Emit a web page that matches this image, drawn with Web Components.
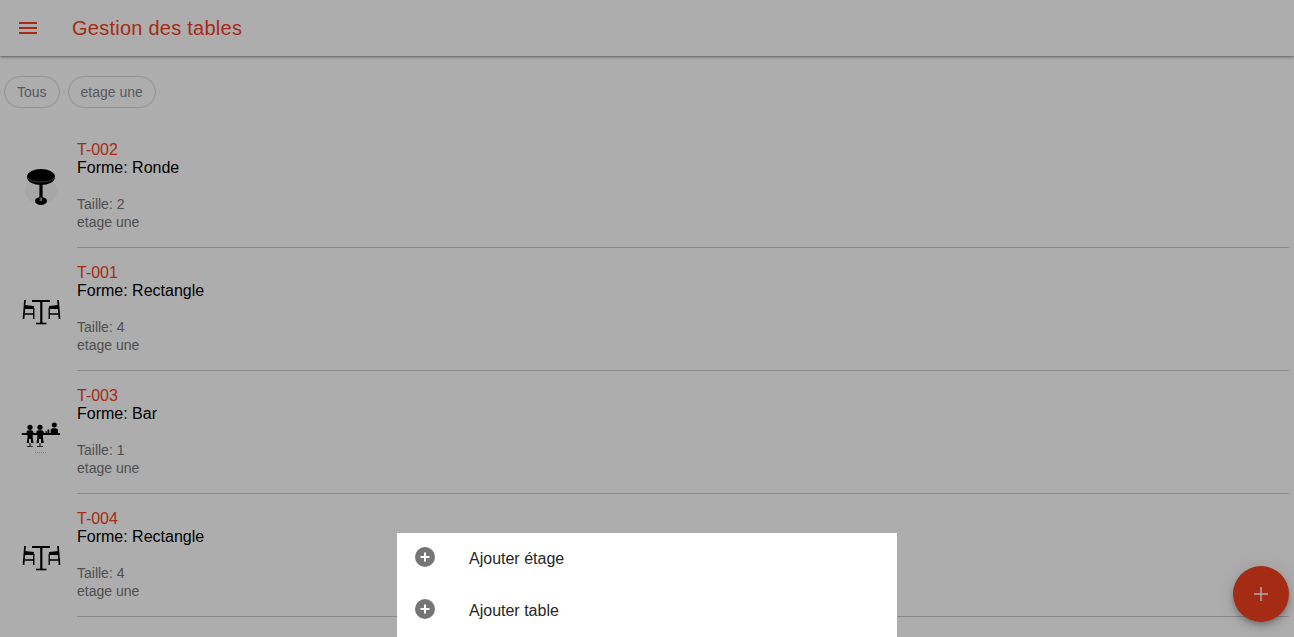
<!DOCTYPE html>
<html lang="fr">
<head>
<meta charset="utf-8">
<title>Gestion des tables</title>
<style>
  html, body { margin: 0; height: 100%; overflow: hidden; background: #fff; }
  body { font-family: "Liberation Sans", Arial, sans-serif; }
</style>
</head>
<body>
<tables-page>
  <app-toolbar>Gestion des tables</app-toolbar>
  <filter-bar>
    <filter-chip>Tous</filter-chip>
    <filter-chip>etage une</filter-chip>
  </filter-bar>
  <table-list>
    <table-row code="T-002" shape="Ronde" size="2" floor="etage une"></table-row>
    <table-row code="T-001" shape="Rectangle" size="4" floor="etage une"></table-row>
    <table-row code="T-003" shape="Bar" size="1" floor="etage une"></table-row>
    <table-row code="T-004" shape="Rectangle" size="4" floor="etage une"></table-row>
  </table-list>
</tables-page>
<add-fab></add-fab>
<page-backdrop></page-backdrop>
<action-sheet>
  <sheet-button>Ajouter étage</sheet-button>
  <sheet-button>Ajouter table</sheet-button>
</action-sheet>

<script>
const RED = '#f5401f';

class TablesPage extends HTMLElement {
  connectedCallback() {
    this.attachShadow({ mode: 'open' }).innerHTML = `
      <style>
        :host { display: block; height: 100vh; overflow: hidden; }
      </style>
      <slot></slot>`;
  }
}

class AppToolbar extends HTMLElement {
  connectedCallback() {
    this.attachShadow({ mode: 'open' }).innerHTML = `
      <style>
        :host {
          display: flex;
          align-items: center;
          height: 56px;
          background: #fff;
          box-shadow: 0 2px 4px -1px rgba(0,0,0,.2), 0 1px 2px rgba(0,0,0,.3);
          position: relative;
          color: ${RED};
        }
        svg { width: 24px; height: 24px; margin-left: 16px; flex: none; }
        .title {
          margin-left: 32px;
          font-size: 20px;
          letter-spacing: .25px;
        }
      </style>
      <svg viewBox="0 0 24 24" fill="currentColor">
        <path d="M3 18h18v-2H3zM3 13h18v-2H3zM3 6v2h18V6z"/>
      </svg>
      <span class="title"><slot></slot></span>`;
  }
}

class FilterBar extends HTMLElement {
  connectedCallback() {
    this.attachShadow({ mode: 'open' }).innerHTML = `
      <style>
        :host { display: flex; gap: 8px; padding: 20px 4px 17px; }
      </style>
      <slot></slot>`;
  }
}

class FilterChip extends HTMLElement {
  connectedCallback() {
    this.attachShadow({ mode: 'open' }).innerHTML = `
      <style>
        :host {
          display: flex;
          align-items: center;
          box-sizing: border-box;
          height: 32px;
          padding: 0 12px;
          border: 1px solid rgba(0,0,0,.16);
          border-radius: 16px;
          font-size: 14px;
          color: #7f8490;
        }
      </style>
      <slot></slot>`;
  }
}

class TableList extends HTMLElement {
  connectedCallback() {
    this.attachShadow({ mode: 'open' }).innerHTML = `
      <style>
        :host { display: block; padding-right: 5px; }
      </style>
      <slot></slot>`;
  }
}

const ICONS = {
  Ronde: `
    <svg viewBox="0 0 50 50" width="50" height="50">
      <ellipse cx="25" cy="28" rx="16" ry="13" fill="#000" opacity=".035"/>
      <ellipse cx="25" cy="14" rx="14" ry="8" fill="#000"/>
      <path d="M11.500 14.500c2.500 6 24.500 6 27 0" fill="none" stroke="#777" stroke-width=".7"/>
      <path d="M23.400 21h3.200v15h-3.200z" fill="#000"/>
      <ellipse cx="25" cy="38" rx="6" ry="4" fill="#000"/>
      <path d="M23.800 34.500h2.400v3.500h-2.400z" fill="#8a8a8a"/>
    </svg>`,
  Rectangle: `
    <svg viewBox="0 0 50 50" width="50" height="50" fill="none" stroke="#000" stroke-width="1.300">
      <path d="M16 15h18" stroke-width="2"/>
      <path d="M25.300 15v22" stroke-width="2.200"/>
      <path d="M20 37.500h10.500" stroke-width="1.600"/>
      <path d="M9 14l-1.500 19" stroke-width="1.700"/>
      <path d="M17.800 22v11M8.500 28h9.300"/>
      <path d="M8.500 19l9.500 1v3H8.500z" fill="#000" stroke="none"/>
      <path d="M42 14l1.500 19" stroke-width="1.700"/>
      <path d="M33.200 22v11M42.500 28h-9.300"/>
      <path d="M42.500 19L33 20v3h9.500z" fill="#000" stroke="none"/>
    </svg>`,
  Bar: `
    <svg viewBox="0 0 50 50" width="50" height="50" fill="#000">
      <path d="M5.700 24h38.300v2H5.700z"/>
      <circle cx="14" cy="18.300" r="2.600"/>
      <path d="M10.700 22.500c.5-1.800 6-1.800 6.500 0l.5 2h-1v4.500l.8 5H15v-4h-2v4h-2.300l.8-5v-4.500h-1z"/>
      <path d="M13.500 34h1v3h-1zM11 37h5.800v.8H11z"/>
      <circle cx="24" cy="18.300" r="2.600"/>
      <path d="M20.500 22.500c.5-1.800 6.500-1.800 7 0l.5 2h-1v4.500l.8 5H25v-4h-2v4h-2.500l.8-5v-4.500h-1z"/>
      <path d="M23.500 34h1v3h-1zM21 37h6v.8h-6z"/>
      <circle cx="38.300" cy="16" r="2.500"/>
      <path d="M34.700 21c0-2.500 7.300-2.500 7.300 0v3h-7.300z"/>
      <path d="M31.500 20.500h1.800V24h-1.800zM29.500 22h1.200v2h-1.200z"/>
      <path d="M19 43h1v.5h-1zM21 43h1v.5h-1zM23 43h1v.5h-1zM25 43h1v.5h-1zM27 43h1v.5h-1zM29 43h1v.5h-1z" opacity=".5"/>
    </svg>`
};

class TableRow extends HTMLElement {
  connectedCallback() {
    const shape = this.getAttribute('shape');
    this.attachShadow({ mode: 'open' }).innerHTML = `
      <style>
        :host { display: flex; height: 123px; align-items: stretch; }
        .thumb {
          flex: none;
          width: 50px;
          margin-left: 16px;
          display: flex;
          align-items: center;
          justify-content: center;
        }
        .thumb svg { display: block; margin-top: 2px; filter: blur(.25px); }
        .body {
          flex: 1;
          margin-left: 11px;
          box-sizing: border-box;
          border-bottom: 1px solid rgba(0,0,0,.2);
          padding-top: 16px;
        }
        .code { font-size: 16px; line-height: 18px; color: ${RED}; }
        .shape { font-size: 16px; line-height: 17px; color: #000; margin-bottom: 19px; }
        .meta { font-size: 14px; line-height: 18px; color: #757575; }
      </style>
      <div class="thumb">${ICONS[shape]}</div>
      <div class="body">
        <div class="code">${this.getAttribute('code')}</div>
        <div class="shape">Forme: ${shape}</div>
        <div class="meta">Taille: ${this.getAttribute('size')}</div>
        <div class="meta">${this.getAttribute('floor')}</div>
      </div>`;
  }
}

class AddFab extends HTMLElement {
  connectedCallback() {
    this.attachShadow({ mode: 'open' }).innerHTML = `
      <style>
        :host {
          position: fixed;
          right: 5px;
          bottom: 15px;
          width: 56px;
          height: 56px;
          border-radius: 50%;
          background: ${RED};
          box-shadow: 0 3px 5px -1px rgba(0,0,0,.2), 0 6px 10px rgba(0,0,0,.14), 0 1px 18px rgba(0,0,0,.12);
          display: flex;
          align-items: center;
          justify-content: center;
        }
        svg { width: 24px; height: 24px; }
      </style>
      <svg viewBox="0 0 24 24" fill="none" stroke="#fff" stroke-width="1.500">
        <path d="M12 5v14M5 12h14"/>
      </svg>`;
  }
}

class PageBackdrop extends HTMLElement {
  connectedCallback() {
    this.attachShadow({ mode: 'open' }).innerHTML = `
      <style>
        :host { position: fixed; inset: 0; background: rgba(0,0,0,.32); }
      </style>`;
  }
}

class ActionSheet extends HTMLElement {
  connectedCallback() {
    this.attachShadow({ mode: 'open' }).innerHTML = `
      <style>
        :host {
          position: fixed;
          left: 50%;
          bottom: 0;
          width: 500px;
          margin-left: -250px;
          background: #fff;
        }
      </style>
      <slot></slot>`;
  }
}

class SheetButton extends HTMLElement {
  connectedCallback() {
    this.attachShadow({ mode: 'open' }).innerHTML = `
      <style>
        :host {
          display: flex;
          align-items: center;
          height: 52px;
          padding-left: 16px;
          font-size: 16px;
          color: #262626;
        }
        svg { width: 24px; height: 24px; flex: none; margin-top: -4px; }
        span { margin-left: 32px; }
      </style>
      <svg viewBox="0 0 24 24">
        <circle cx="12" cy="12" r="10" fill="#757575"/>
        <path d="M12 7.500v9M7.500 12h9" stroke="#fff" stroke-width="2"/>
      </svg>
      <span><slot></slot></span>`;
  }
}

customElements.define('tables-page', TablesPage);
customElements.define('app-toolbar', AppToolbar);
customElements.define('filter-bar', FilterBar);
customElements.define('filter-chip', FilterChip);
customElements.define('table-list', TableList);
customElements.define('table-row', TableRow);
customElements.define('add-fab', AddFab);
customElements.define('page-backdrop', PageBackdrop);
customElements.define('action-sheet', ActionSheet);
customElements.define('sheet-button', SheetButton);
</script>
</body>
</html>
